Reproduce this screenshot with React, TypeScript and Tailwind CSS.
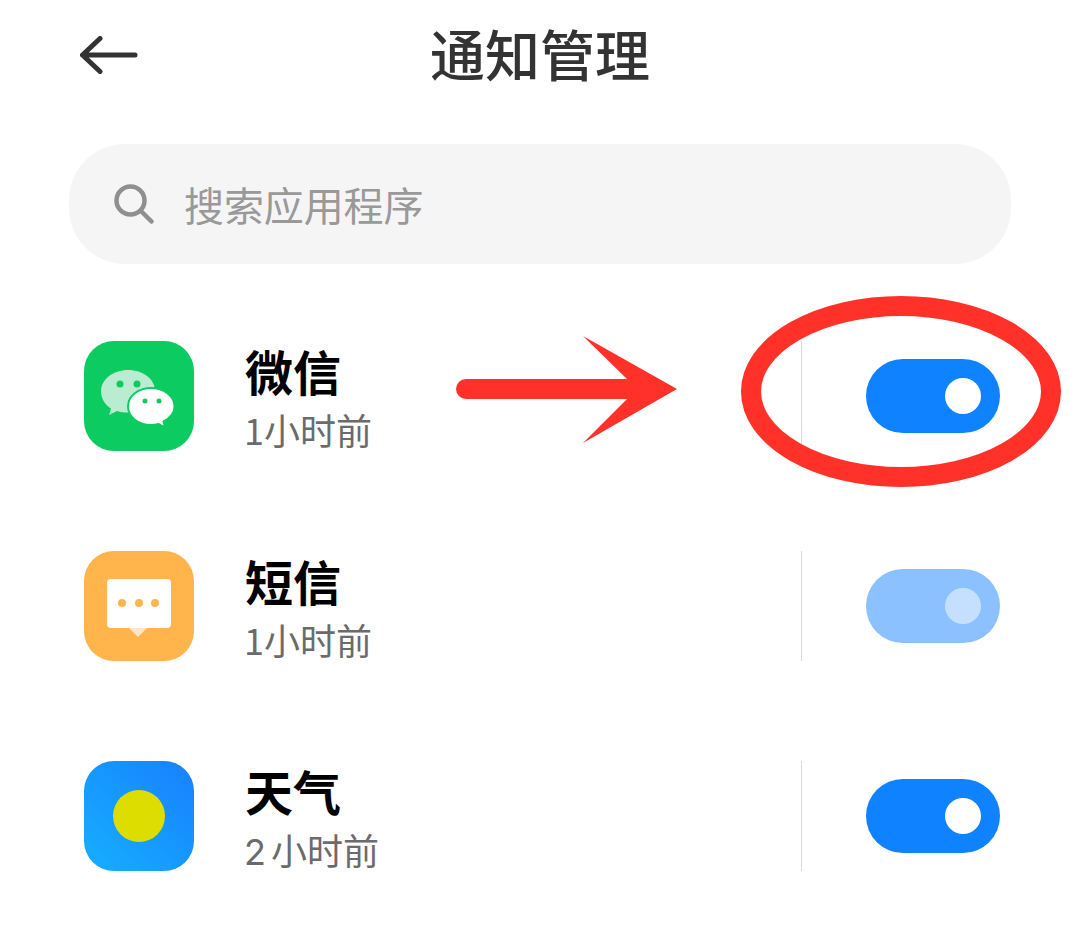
const Wechat = () => (
  <svg viewBox="0 0 110 110" className="size-full">
    <path d="M44 29c-15 0-27 9.500-27 21.500 0 7 4 13 10 17l-2 6.500 8-4c3.500 1 7 1.500 11 1.500 15 0 27-9.500 27-21.500S59 29 44 29z" fill="#b9ecd0" />
    <circle cx="36" cy="43" r="3.500" fill="#0ccb60" />
    <circle cx="53" cy="43" r="3.500" fill="#0ccb60" />
    <path d="M67 47c-12.500 0-23 8-23 18.500S54.500 84 67 84c2.500 0 5-.3 7.500-1l6.500 3.500-1.500-6c6.500-3.500 11-8.700 11-15C90.500 55 79.500 47 67 47z" fill="#fff" stroke="#0ccb60" strokeWidth="2" />
    <circle cx="61" cy="60" r="2.500" fill="#0ccb60" />
    <circle cx="75" cy="60" r="2.500" fill="#0ccb60" />
  </svg>
)

const Sms = () => (
  <svg viewBox="0 0 110 110" className="size-full">
    <path d="M44 76h20l-10 10z" fill="#fde6c8" />
    <rect x="23" y="28" width="64" height="49" rx="4" fill="#fff" />
    <circle cx="38" cy="52" r="4" fill="#ffb54c" />
    <circle cx="55" cy="52" r="4" fill="#ffb54c" />
    <circle cx="71" cy="52" r="4" fill="#ffb54c" />
  </svg>
)

const Row = ({
  icon,
  iconClass,
  name,
  digit,
  digitClass,
  faded,
}: {
  icon?: React.ReactNode
  iconClass: string
  name: string
  digit: string
  digitClass: string
  faded?: boolean
}) => (
  <div className="flex h-[110px] items-center pl-[84px] pr-[80px]">
    <div className={`size-[110px] shrink-0 overflow-hidden rounded-[30px] ${iconClass}`}>{icon}</div>
    <div className="ml-[50px] flex-1">
      <div className="h-[62px] -translate-y-[2px] pl-px text-[48px] leading-[62px] font-bold text-black">{name}</div>
      <div className="h-[48px] translate-y-[2px] text-[36px] leading-[48px] text-[#6b6b6b]">
        <span className={`inline-block ${digitClass}`}>{digit}</span>小时前
      </div>
    </div>
    <div className="h-[110px] w-px bg-[#d9d9d9]" />
    <div
      className={`ml-[64px] flex h-[74px] w-[134px] items-center justify-end rounded-[37px] pr-[19px] ${
        faded ? 'bg-[#8bc1ff]' : 'bg-[#0f82ff]'
      }`}
    >
      <div className={`size-[36px] rounded-full ${faded ? 'bg-[#c5e0ff]' : 'bg-white'}`} />
    </div>
  </div>
)

export default function App() {
  return (
    <div className="relative h-[935px] w-[1080px] overflow-hidden bg-white font-['Noto_Sans_CJK_SC',sans-serif]">
      <div className="grid h-[110px] grid-cols-[1fr_auto_1fr] items-center pl-[80px]">
        <svg viewBox="0 0 58 38" className="h-[38px] w-[58px]" fill="none" stroke="#333333" strokeWidth="5" strokeLinecap="round" strokeLinejoin="round">
          <path d="M2.500 19H55M20 2.500L2.500 19 20 35.500" />
        </svg>
        <h1 className="-ml-[80px] -translate-y-[3px] text-[55px] leading-[70px] font-medium text-[#333333]">通知管理</h1>
      </div>

      <div className="mx-[69px] mt-[34px] flex h-[120px] w-[942px] items-center rounded-[56px] bg-[#f5f5f5] pl-[45px]">
        <svg viewBox="0 0 40 40" className="size-[40px]" fill="none" stroke="#8f8f8f" strokeWidth="4.500" strokeLinecap="round">
          <circle cx="16.500" cy="16.500" r="14" />
          <path d="M27 27l10.500 10.500" />
        </svg>
        <span className="ml-[30px] text-[40px] leading-[50px] tracking-[-0.1px] text-[#999999]">搜索应用程序</span>
      </div>

      <div className="mt-[77px] flex flex-col gap-[100px]">
        <Row icon={<Wechat />} iconClass="bg-[#0ccb60]" name="微信" digit="1" digitClass="w-[20px]" />
        <Row faded icon={<Sms />} iconClass="bg-[#ffb54c]" name="短信" digit="1" digitClass="w-[20px]" />
        <Row
          icon={
            <div className="flex size-full items-center justify-center">
              <div className="size-[52px] rounded-full bg-[#dddd00]" />
            </div>
          }
          iconClass="bg-gradient-to-tr from-[#19aeff] to-[#1a80ff]"
          name="天气"
          digit="2"
          digitClass="w-[27px] font-['Inter',sans-serif]"
        />
      </div>

      <svg viewBox="0 0 1080 935" className="absolute inset-0 size-full">
        <path d="M466 379H627L583 336 677 389 583 443 627 399H466a10 10 0 0 1 0-20z" fill="#ff3128" />
        <ellipse cx="901" cy="391.500" rx="150" ry="85.500" fill="none" stroke="#ff3128" strokeWidth="20" />
      </svg>
    </div>
  )
}
